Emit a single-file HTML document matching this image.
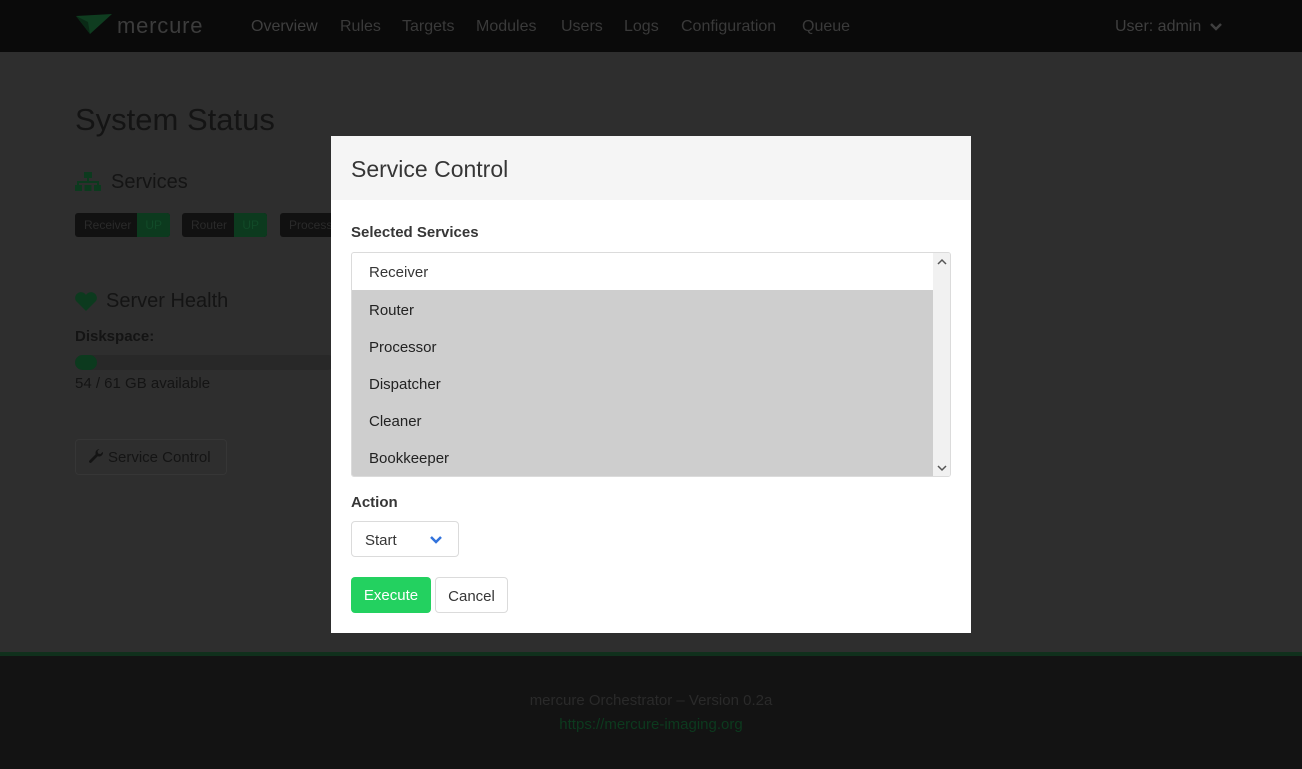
<!DOCTYPE html>
<html><head><meta charset="utf-8"><style>
*{box-sizing:border-box;margin:0;padding:0}
body{width:1302px;height:769px;overflow:hidden;font-family:"Liberation Sans",sans-serif;background:#2e2e2e;position:relative}
.a{position:absolute}
.nav{left:0;top:0;width:1302px;height:52px;background:#0a0a0a}
.nav span{position:absolute;top:18px;font-size:16px;color:#3a3a3a}
.dim{color:#141414}
.tag{position:absolute;top:213px;height:24px;border-radius:3px;background:#111;font-size:12px;color:#2a2a2a;line-height:24px;overflow:hidden}
.tag i{font-style:normal;display:inline-block;background:#0c3a1e;padding:0 8px;color:#114a28}
.modal{left:331px;top:136px;width:640px;height:497px;background:#fff}
.mh{height:64px;background:#f5f5f5;font-size:23px;color:#363636;padding:20px 20px}
.lbl{font-weight:bold;font-size:15px;color:#363636}
.opt{position:absolute;left:17px;font-size:15px;color:#222}
</style></head><body>
<div class="a nav">
<svg class="a" style="left:76px;top:14px" width="38" height="22" viewBox="0 0 38 22"><path d="M0 2 L36 0 L14 20 Z" fill="#0f3d20"/><path d="M0 2 L14 20 L12 8 Z" fill="#0a2a16"/></svg>
<span style="left:117px;top:13px;font-size:22px;color:#3c3c3c;letter-spacing:0.8px">mercure</span>
<span style="left:251px;color:#3f3f3f">Overview</span><span style="left:340px">Rules</span><span style="left:402px">Targets</span><span style="left:476px">Modules</span><span style="left:561px">Users</span><span style="left:624px">Logs</span><span style="left:681px">Configuration</span><span style="left:802px">Queue</span>
<span style="left:1115px;color:#3f3f3f">User: admin</span>
<svg class="a" style="left:1209px;top:22px" width="14" height="10"><path d="M2 2l5 5 5-5" stroke="#3f3f3f" stroke-width="2.5" fill="none"/></svg>
</div>
<div class="a dim" style="left:75px;top:102px;font-size:31px">System Status</div>
<svg class="a" style="left:75px;top:172px" width="26" height="20"><rect x="9" y="0" width="8" height="6" fill="#0c3a1e"/><rect x="0" y="13" width="7" height="6" fill="#0c3a1e"/><rect x="9.5" y="13" width="7" height="6" fill="#0c3a1e"/><rect x="19" y="13" width="7" height="6" fill="#0c3a1e"/><path d="M13 6v4M3 13v-3h20v3" stroke="#0c3a1e" stroke-width="2" fill="none"/></svg>
<div class="a dim" style="left:111px;top:171px;font-size:20px">Services</div>
<div class="tag" style="left:75px;width:95px;padding-left:9px">Receiver <i style="position:absolute;right:0;top:0">UP</i></div>
<div class="tag" style="left:182px;width:85px;padding-left:9px">Router <i style="position:absolute;right:0;top:0">UP</i></div>
<div class="tag" style="left:280px;width:60px;padding-left:9px">Processor</div>
<svg class="a" style="left:75px;top:292px" width="22" height="19" viewBox="0 0 22 19"><path d="M11 19 L1 9 A5 5 0 0 1 11 3 A5 5 0 0 1 21 9 Z" fill="#0c3a1e"/></svg>
<div class="a dim" style="left:106px;top:290px;font-size:20px">Server Health</div>
<div class="a dim" style="left:75px;top:328px;font-size:15px;font-weight:bold">Diskspace:</div>
<div class="a" style="left:75px;top:355px;width:260px;height:15px;border-radius:8px;background:#282828;overflow:hidden"><div style="width:22px;height:15px;background:#0c3a1e;border-radius:8px"></div></div>
<div class="a dim" style="left:75px;top:375px;font-size:15px">54 / 61 GB available</div>
<div class="a" style="left:75px;top:439px;width:152px;height:36px;border:1px solid #363636;border-radius:4px;color:#141414;font-size:15px;padding:9px 0 0 32px">Service Control</div>
<svg class="a" style="left:88px;top:448px" width="16" height="16" viewBox="0 0 16 16"><path d="M15 4.5a4 4 0 0 1-5.3 3.8L3.5 14.5a1.4 1.4 0 0 1-2-2l6.2-6.2A4 4 0 0 1 11.5 1l-2 2 .5 2.5 2.5.5 2-2z" fill="#141414"/></svg>
<div class="a" style="left:0;top:652px;width:1302px;height:117px;background:#131313;border-top:4px solid #10301c"></div>
<div class="a" style="left:0;top:692px;width:1302px;text-align:center;font-size:15px;color:#2a2a2a">mercure Orchestrator &ndash; Version 0.2a</div>
<div class="a" style="left:0;top:716px;width:1302px;text-align:center;font-size:15px;color:#0c3a1e">https://mercure-imaging.org</div>

<div class="a modal">
<div class="mh">Service Control</div>
<div class="a lbl" style="left:20px;top:88px">Selected Services</div>
<div class="a" style="left:20px;top:116px;width:600px;height:225px;border:1px solid #dbdbdb;border-radius:3px;overflow:hidden">
<div class="a" style="left:0;top:37px;width:581px;height:187px;background:#cecece"></div>
<div class="a" style="left:581px;top:0;width:18px;height:225px;background:#f1f1f1"></div>
<svg class="a" style="left:585px;top:5px" width="10" height="8"><path d="M1 6l4-4 4 4" stroke="#555" stroke-width="1.5" fill="none"/></svg>
<svg class="a" style="left:585px;top:211px" width="10" height="8"><path d="M1 2l4 4 4-4" stroke="#555" stroke-width="1.5" fill="none"/></svg>
<div class="opt" style="top:11px;color:#363636">Receiver</div>
<div class="opt" style="top:49px">Router</div>
<div class="opt" style="top:86px">Processor</div>
<div class="opt" style="top:123px">Dispatcher</div>
<div class="opt" style="top:160px">Cleaner</div>
<div class="opt" style="top:197px">Bookkeeper</div>
</div>
<div class="a lbl" style="left:20px;top:358px">Action</div>
<div class="a" style="left:20px;top:385px;width:108px;height:36px;border:1px solid #dbdbdb;border-radius:4px;font-size:15px;color:#363636;padding:10px 0 0 13px">Start
<svg class="a" style="left:77px;top:13px" width="14" height="10"><path d="M2 2l5 5 5-5" stroke="#3273dc" stroke-width="2.5" fill="none"/></svg></div>
<div class="a" style="left:20px;top:441px;width:80px;height:36px;background:#23d160;border-radius:4px;color:#fff;font-size:15px;text-align:center;line-height:38px">Execute</div>
<div class="a" style="left:104px;top:441px;width:73px;height:36px;border:1px solid #dbdbdb;border-radius:4px;color:#363636;font-size:15px;text-align:center;line-height:37px">Cancel</div>
</div>
</body></html>
